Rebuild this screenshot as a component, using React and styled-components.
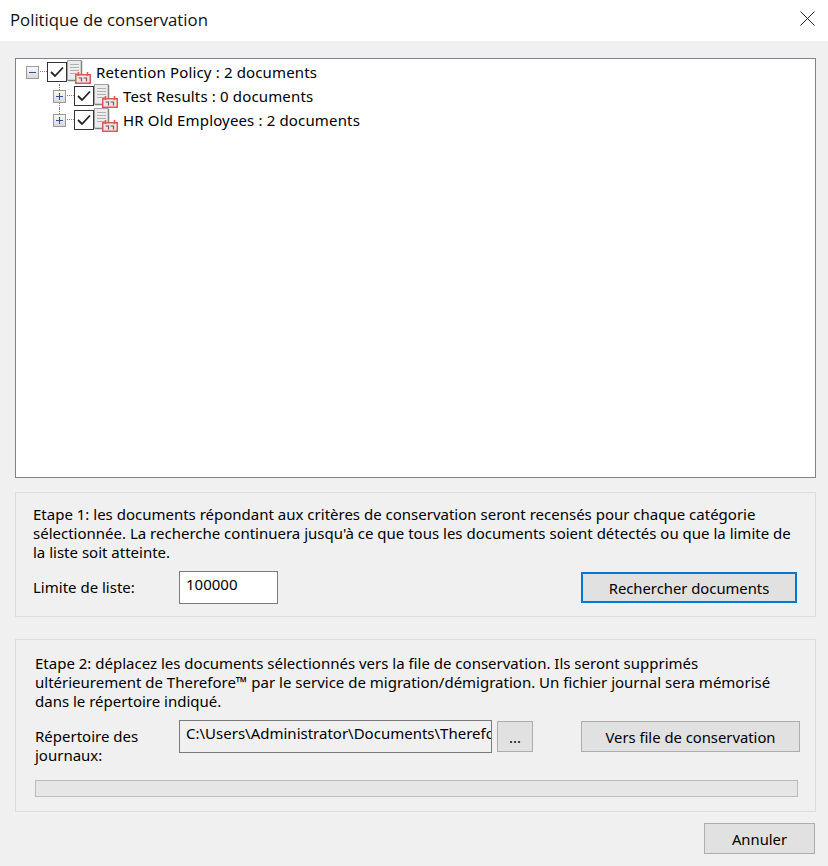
import styled, { createGlobalStyle } from "styled-components";

const GlobalStyle = createGlobalStyle`
  html, body {
    margin: 0;
    padding: 0;
    background: #ffffff;
  }
  * {
    box-sizing: border-box;
  }
`;

const Window = styled.div`
  width: 828px;
  height: 866px;
  display: flex;
  flex-direction: column;
  font-family: "Noto Sans", "DejaVu Sans", sans-serif;
  font-size: 15px;
  color: #000;
  overflow: hidden;
`;

const TitleBar = styled.div`
  height: 41px;
  flex: none;
  display: flex;
  align-items: center;
  justify-content: space-between;
  padding: 0 13px 2px 10px;
  background: #fff;
`;

const Title = styled.div`
  font-family: "Open Sans", sans-serif;
  font-size: 16.75px;
  color: #111;
`;

const Body = styled.div`
  flex: 1;
  background: #f0f0f0;
  padding: 17px 12px 0 15px;
  display: flex;
  flex-direction: column;
`;

const Tree = styled.div`
  height: 420px;
  flex: none;
  background: #fff;
  border: 1px solid #82828f;
  padding-top: 1px;
`;

const TreeRow = styled.div`
  position: relative;
  height: 24px;
  display: flex;
  align-items: center;
  padding-left: ${(props) => (props.level ? 37 : 10)}px;
  &::before {
    content: ${(props) => (props.level ? '""' : "none")};
    position: absolute;
    left: 43px;
    top: 0;
    height: ${(props) => (props.last ? 12 : 24)}px;
    border-left: 1px dotted #808080;
  }
`;

const Toggle = styled.span`
  position: relative;
  width: 13px;
  height: 13px;
  flex: none;
  margin-right: 8px;
  border: 1px solid #9a9a9a;
  background: linear-gradient(#f8f8f8, #d8d8d8);
  z-index: 1;
  &::before {
    content: "";
    position: absolute;
    left: 2px;
    right: 2px;
    top: 5px;
    height: 1px;
    background: #2f4f8f;
  }
  &::after {
    content: ${(props) => (props.open ? "none" : '""')};
    position: absolute;
    top: 2px;
    bottom: 2px;
    left: 5px;
    width: 1px;
    background: #2f4f8f;
  }
`;

const Connector = styled.span`
  position: absolute;
  left: ${(props) => (props.level ? 49 : 22)}px;
  width: 9px;
  top: 11px;
  border-top: 1px dotted #808080;
`;

const CheckBox = styled.span`
  width: 20px;
  height: 20px;
  flex: none;
  display: flex;
  align-items: center;
  justify-content: center;
  border: 1px solid #333;
  background: #fff;
  z-index: 1;
`;

const RowLabel = styled.span`
  margin-left: 5px;
  white-space: nowrap;
  letter-spacing: 0.15px;
  color: #000;
`;

const Group = styled.div`
  flex: none;
  height: ${(props) => props.height}px;
  margin-top: ${(props) => props.top}px;
  padding: ${(props) => props.pad};
  border: 1px solid #dcdcdc;
`;

const Paragraph = styled.div`
  line-height: 19px;
  white-space: nowrap;
  color: #000;
`;

const FormRow = styled.div`
  display: flex;
  align-items: ${(props) => (props.top ? "flex-start" : "center")};
  margin-top: ${(props) => props.gap}px;
`;

const FieldLabel = styled.div`
  width: ${(props) => props.width}px;
  flex: none;
  line-height: 19px;
  padding-top: ${(props) => props.pt || 0}px;
  color: #000;
`;

const Field = styled.div`
  width: ${(props) => props.width}px;
  height: 33px;
  flex: none;
  padding: 3px 3px 0 6px;
  background: ${(props) => (props.readOnly ? "#f0f0f0" : "#fff")};
  border: 1px solid #7a7a7a;
  line-height: 19px;
  white-space: nowrap;
  overflow: hidden;
`;

const Button = styled.div`
  width: ${(props) => props.width}px;
  height: 31px;
  margin-left: ${(props) => props.left || 0}px;
  margin-top: ${(props) => props.down || 0}px;
  flex: none;
  display: flex;
  align-items: center;
  justify-content: center;
  background: #e1e1e1;
  border: ${(props) => (props.focused ? "2px solid #0078d7" : "1px solid #adadad")};
  color: #000;
  font-size: 14.8px;
  white-space: nowrap;
`;

const Progress = styled.div`
  height: 17px;
  width: 763px;
  margin-top: 15px;
  background: #e6e6e6;
  border: 1px solid #bcbcbc;
`;

const Footer = styled.div`
  display: flex;
  justify-content: flex-end;
  margin-top: 11px;
  padding-right: 1px;
`;

const CloseGlyph = styled.svg`
  flex: none;
  margin-bottom: 2px;
`;

function CloseIcon() {
  return (
    <CloseGlyph width="15" height="15" viewBox="0 0 15 15">
      <path d="M0.5 0.5 L14.5 14.5 M14.5 0.5 L0.5 14.5" stroke="#222" strokeWidth="1" fill="none" />
    </CloseGlyph>
  );
}

function CheckMark() {
  return (
    <svg width="14" height="12" viewBox="0 0 14 12">
      <path d="M1 6 L5 10 L13 1.5" stroke="#222" strokeWidth="1.8" fill="none" />
    </svg>
  );
}

function PolicyIcon() {
  return (
    <svg width="24" height="24" viewBox="0 0 24 24" style={{ flex: "none" }}>
      <path d="M0.5 0.5 H14.5 V20.5 H0.5 Z" fill="#ececec" stroke="#a0a0a0" />
      <path d="M14.5 1 V21 M1 20.5 H15" stroke="#808080" strokeWidth="1.5" />
      <path d="M3 4.5 H12 M3 7.5 H12 M3 10.5 H12 M3 13.5 H12" stroke="#b0b0b0" strokeWidth="1.2" />
      <rect x="8.75" y="14.75" width="14.5" height="8.5" fill="#f6e4e2" stroke="#dc5a56" strokeWidth="1.5" />
      <path d="M11.5 12 V16 M20.5 12 V16" stroke="#dc5a56" strokeWidth="1.6" />
      <path d="M11.5 18 H14.5 V21.5 M16.5 18 H19.5 V21.5" stroke="#5f5f5f" strokeWidth="1.2" fill="none" />
    </svg>
  );
}

function TreeItem({ level, open, last, label }) {
  return (
    <TreeRow level={level} last={last}>
      <Toggle open={open} />
      <Connector level={level} />
      <CheckBox>
        <CheckMark />
      </CheckBox>
      <PolicyIcon />
      <RowLabel>{label}</RowLabel>
    </TreeRow>
  );
}

export default function App() {
  return (
    <Window>
      <GlobalStyle />
      <TitleBar>
        <Title>Politique de conservation</Title>
        <CloseIcon />
      </TitleBar>
      <Body>
        <Tree>
          <TreeItem open label="Retention Policy : 2 documents" />
          <TreeItem level={1} label="Test Results : 0 documents" />
          <TreeItem level={1} last label="HR Old Employees : 2 documents" />
        </Tree>

        <Group top={14} height={125} pad="12px 18px 0 17px">
          <Paragraph>
            Etape 1: les documents répondant aux critères de conservation seront recensés pour chaque catégorie
            <br />
            sélectionnée. La recherche continuera jusqu'à ce que tous les documents soient détectés ou que la limite de
            <br />
            la liste soit atteinte.
          </Paragraph>
          <FormRow gap={9}>
            <FieldLabel width={146}>Limite de liste:</FieldLabel>
            <Field width={99}>100000</Field>
            <Button focused width={216} left={303}>
              Rechercher documents
            </Button>
          </FormRow>
        </Group>

        <Group top={22} height={173} pad="14px 15px 0 19px">
          <Paragraph>
            Etape 2: déplacez les documents sélectionnés vers la file de conservation. Ils seront supprimés
            <br />
            ultérieurement de Therefore™ par le service de migration/démigration. Un fichier journal sera mémorisé
            <br />
            dans le répertoire indiqué.
          </Paragraph>
          <FormRow top gap={9}>
            <FieldLabel width={144} pt={7}>
              Répertoire des journaux:
            </FieldLabel>
            <Field readOnly width={313}>
              C:\Users\Administrator\Documents\Therefore
            </Field>
            <Button width={36} left={5} down={1}>
              ...
            </Button>
            <Button width={219} left={48} down={1}>
              Vers file de conservation
            </Button>
          </FormRow>
          <Progress />
        </Group>

        <Footer>
          <Button width={111}>Annuler</Button>
        </Footer>
      </Body>
    </Window>
  );
}
